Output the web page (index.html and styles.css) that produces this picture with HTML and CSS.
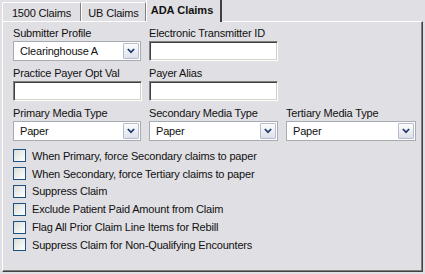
FILE: index.html
```html
<!DOCTYPE html>
<html lang="en">
<head>
<meta charset="UTF-8">
<title>ADA Claims</title>
<link rel="stylesheet" href="styles.css">
</head>
<body>
<div class="tabs">
    <div class="tab tab-1500">1500 Claims</div>
    <div class="tab tab-ub">UB Claims</div>
    <div class="tab tab-ada active">ADA Claims</div>
</div>
<div class="panel">
    <div class="fields">
        <div class="field">
            <label>Submitter Profile</label>
            <div class="select"><span class="value">Clearinghouse A</span><span class="drop"><svg width="8" height="6" viewBox="0 0 8 6"><polyline points="0.8,1 4,4.2 7.2,1" fill="none" stroke="#243a6b" stroke-width="1.7"/></svg></span></div>
        </div>
        <div class="field">
            <label>Electronic Transmitter ID</label>
            <input type="text" class="text">
        </div>
        <div class="field"></div>
        <div class="field">
            <label>Practice Payer Opt Val</label>
            <input type="text" class="text">
        </div>
        <div class="field">
            <label>Payer Alias</label>
            <input type="text" class="text">
        </div>
        <div class="field"></div>
        <div class="field">
            <label>Primary Media Type</label>
            <div class="select"><span class="value">Paper</span><span class="drop"><svg width="8" height="6" viewBox="0 0 8 6"><polyline points="0.8,1 4,4.2 7.2,1" fill="none" stroke="#243a6b" stroke-width="1.7"/></svg></span></div>
        </div>
        <div class="field">
            <label>Secondary Media Type</label>
            <div class="select"><span class="value">Paper</span><span class="drop"><svg width="8" height="6" viewBox="0 0 8 6"><polyline points="0.8,1 4,4.2 7.2,1" fill="none" stroke="#243a6b" stroke-width="1.7"/></svg></span></div>
        </div>
        <div class="field">
            <label>Tertiary Media Type</label>
            <div class="select"><span class="value">Paper</span><span class="drop"><svg width="8" height="6" viewBox="0 0 8 6"><polyline points="0.8,1 4,4.2 7.2,1" fill="none" stroke="#243a6b" stroke-width="1.7"/></svg></span></div>
        </div>
    </div>
    <div class="checks">
        <label class="check"><input type="checkbox" class="box">When Primary, force Secondary claims to paper</label>
        <label class="check"><input type="checkbox" class="box">When Secondary, force Tertiary claims to paper</label>
        <label class="check"><input type="checkbox" class="box">Suppress Claim</label>
        <label class="check"><input type="checkbox" class="box">Exclude Patient Paid Amount from Claim</label>
        <label class="check"><input type="checkbox" class="box">Flag All Prior Claim Line Items for Rebill</label>
        <label class="check"><input type="checkbox" class="box">Suppress Claim for Non-Qualifying Encounters</label>
    </div>
</div>
</body>
</html>
```

FILE: styles.css
```css
body {
    margin: 0;
    background: #e0dfe3;
    font-family: "Liberation Sans", Arial, sans-serif;
    font-size: 11px;
    letter-spacing: -0.18px;
    color: #111;
}
.tabs {
    display: flex;
    align-items: flex-end;
    height: 21px;
    padding-left: 2px;
}
.tab {
    box-sizing: border-box;
    height: 19px;
    padding-top: 1px;
    line-height: 18px;
    text-align: center;
    border-top: 1px solid #fff;
    border-left: 1px solid #fff;
    border-right: 1px solid #808080;
    border-radius: 2px 2px 0 0;
    white-space: nowrap;
}
.tab-1500 {
    width: 79px;
}
.tab-ub {
    width: 65px;
}
.tab-ada {
    width: 76px;
}
.tab.active {
    position: relative;
    z-index: 1;
    height: 23px;
    margin-bottom: -1px;
    padding-right: 3px;
    font-weight: bold;
    letter-spacing: 0;
    border-right: 2px solid #404040;
    background: #e0dfe3;
}
.panel {
    box-sizing: border-box;
    height: 251px;
    margin: 0 2px;
    padding: 5px 10px 0;
    border: 1px solid;
    border-color: #fff #404040 #404040 #fff;
    box-shadow: inset -1px -1px #808080;
}
.fields {
    display: grid;
    grid-template-columns: 128px 129px 130px;
    column-gap: 8px;
    row-gap: 6px;
}
.field label {
    display: block;
    line-height: 13px;
    margin-bottom: 1px;
    white-space: nowrap;
}
.select {
    box-sizing: border-box;
    display: flex;
    align-items: center;
    height: 20px;
    padding-left: 6px;
    border: 1px solid #a5acb2;
    background: #fff;
}
.select .value {
    flex: 1;
}
.drop {
    box-sizing: border-box;
    display: flex;
    align-items: center;
    justify-content: center;
    width: 16px;
    height: 16px;
    margin-right: 1px;
    border: 1px solid #b6bdd2;
    border-radius: 1px;
    background: linear-gradient(#fdfdfd, #dde0ea);
}
.text {
    display: block;
    box-sizing: border-box;
    width: 129px;
    height: 20px;
    margin: 0;
    border: 1px solid;
    border-color: #808080 #fff #fff #808080;
    box-shadow: inset 1px 1px #404040, inset -1px -1px #d4d0c8;
    background: #fff;
}
.checks {
    margin-top: 6px;
}
.check {
    display: flex;
    align-items: center;
    gap: 6px;
    height: 17.8px;
    white-space: nowrap;
}
.box {
    appearance: none;
    box-sizing: border-box;
    width: 13px;
    height: 13px;
    margin: 0;
    border: 1px solid #1c5180;
    background: linear-gradient(135deg, #dcdcd7, #fff);
}
```
